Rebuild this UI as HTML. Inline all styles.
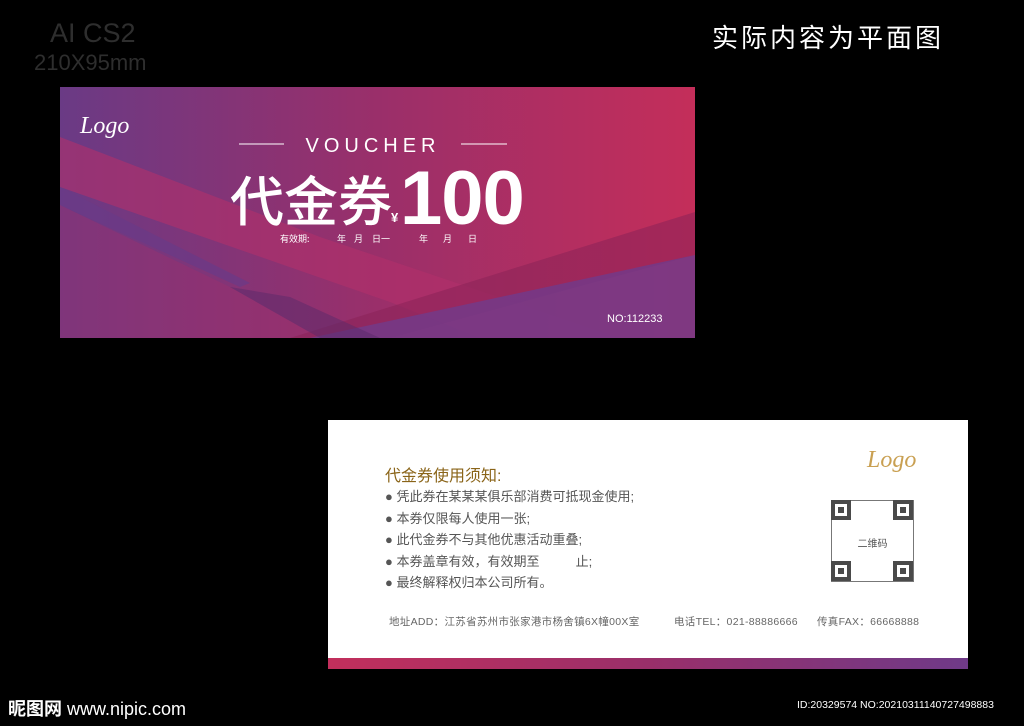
<!DOCTYPE html>
<html><head><meta charset="utf-8"><style>
body{margin:0;width:1024px;height:726px;background:#000;position:relative;overflow:hidden;font-family:"Liberation Sans","Noto Sans CJK SC",sans-serif}
.a{position:absolute;white-space:nowrap}
.q{position:absolute;width:12px;height:12px;border:4px solid #4a4a4a;box-shadow:inset 0 0 0 3px #fff;background:#4a4a4a}
</style></head><body>
<div class="a" style="left:50px;top:18px;color:#2e2e2e;font-size:27px;line-height:30px">AI CS2</div>
<div class="a" style="left:34px;top:50px;color:#2e2e2e;font-size:22px;line-height:26px">210X95mm</div>
<div class="a" style="left:712px;top:22px;color:#fff;font-size:26px;letter-spacing:3px;line-height:32px">实际内容为平面图</div>

<svg class="a" style="left:60px;top:87px" width="635" height="251" viewBox="0 0 635 251">
<defs><linearGradient id="g" x1="0" x2="1"><stop offset="0" stop-color="#6a3a85"/><stop offset=".5" stop-color="#9a2f6a"/><stop offset="1" stop-color="#c42e5a"/></linearGradient></defs>
<rect width="635" height="251" fill="url(#g)"/>
<polygon points="0,50 0,100 330,215 420,251 560,251 260,150" fill="#b2306a" opacity=".6"/>
<polygon points="0,100 0,118 180,200 190,196" fill="#6a3a88" opacity=".7"/>
<polygon points="0,118 0,251 260,251 170,200" fill="#a0306c" opacity=".4"/>
<polygon points="635,125 635,168 330,251 230,251" fill="#8a2258" opacity=".55"/>
<polygon points="635,168 635,251 250,251" fill="#733a88" opacity=".85"/>
<polygon points="170,200 260,251 320,251 230,210" fill="#5a2a6a" opacity=".5"/>
<text x="20" y="46" font-family="Liberation Serif,serif" font-style="italic" font-size="24" fill="#fff">Logo</text>
<line x1="179" y1="57" x2="224" y2="57" stroke="#fff" stroke-width="1"/>
<line x1="401" y1="57" x2="447" y2="57" stroke="#fff" stroke-width="1"/>
<text x="313" y="65" text-anchor="middle" font-size="20" letter-spacing="5" fill="#fff">VOUCHER</text>
<text x="170" y="134" font-family="Noto Sans CJK SC,sans-serif" font-size="54" font-weight="500" fill="#fff">代金券</text>
<text x="331" y="135" font-size="13" font-weight="bold" fill="#fff">¥</text>
<text x="340" y="137" font-size="76" font-weight="bold" fill="#fff" letter-spacing="-1">100</text>
<g font-family="Noto Sans CJK SC,sans-serif" font-size="9" fill="#fff">
<text x="220" y="155">有效期:</text>
<text x="277" y="155">年</text><text x="294" y="155">月</text><text x="312" y="155">日一</text>
<text x="359" y="155">年</text><text x="383" y="155">月</text><text x="408" y="155">日</text>
</g>
<text x="547" y="235" font-size="11" fill="#fff">NO:112233</text>
</svg>

<div class="a" style="left:328px;top:420px;width:640px;height:249px;background:#fff">
<div class="a" style="left:539px;top:27px;font-family:'Liberation Serif',serif;font-style:italic;font-size:24px;color:#c9a052">Logo</div>
<div class="a" style="left:57px;top:42px;font-size:16px;color:#8a6418">代金券使用须知:</div>
<div class="a" style="left:57px;top:66px;font-size:13px;line-height:21.5px;color:#555">● 凭此券在某某某俱乐部消费可抵现金使用;<br>● 本券仅限每人使用一张;<br>● 此代金券不与其他优惠活动重叠;<br>● 本券盖章有效，有效期至&nbsp;&nbsp;&nbsp;&nbsp;&nbsp;&nbsp;&nbsp;&nbsp;&nbsp;&nbsp;止;<br>● 最终解释权归本公司所有。</div>
<div class="a" style="left:503px;top:80px;width:81px;height:80px;border:1px solid #777"></div>
<div class="q" style="left:503px;top:80px"></div>
<div class="q" style="left:565px;top:80px"></div>
<div class="q" style="left:503px;top:141px"></div>
<div class="q" style="left:565px;top:141px"></div>
<div class="a" style="left:503px;top:115px;width:83px;text-align:center;font-size:10px;color:#555">二维码</div>
<div class="a" style="left:61px;top:194px;font-size:10.5px;color:#666;letter-spacing:.3px">地址ADD：江苏省苏州市张家港市杨舍镇6X幢00X室</div>
<div class="a" style="left:346px;top:194px;font-size:10.5px;color:#666;letter-spacing:.3px">电话TEL：021-88886666</div>
<div class="a" style="left:489px;top:194px;font-size:10.5px;color:#666;letter-spacing:.3px">传真FAX：66668888</div>
<div class="a" style="left:0;top:238px;width:640px;height:11px;background:linear-gradient(90deg,#c22f5c,#9a2f6a,#6f3a88)"></div>
</div>

<div class="a" style="left:8px;top:695px;color:#fff;font-size:18px;font-weight:bold">昵图网 <span style="font-weight:normal">www.nipic.com</span></div>
<div class="a" style="left:797px;top:699px;color:#fff;font-size:10.5px">ID:20329574 NO:20210311140727498883</div>
</body></html>
